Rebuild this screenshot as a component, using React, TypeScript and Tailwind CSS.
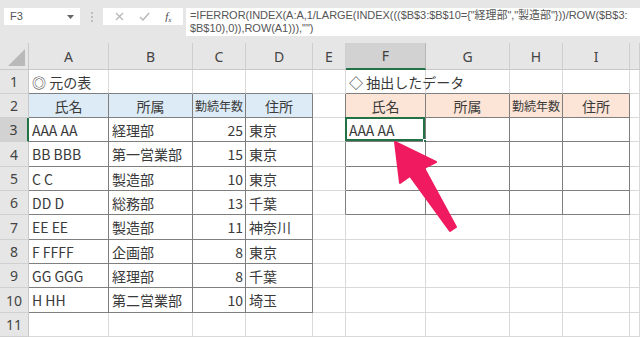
import React from "react";

const cols = ["A", "B", "C", "D", "E", "F", "G", "H", "I", ""];
const rowH = ["h-[24px]", "h-[24px]", "h-[24px]", "h-[25px]", "h-[24px]", "h-[24px]", "h-[25px]", "h-[24px]", "h-[24px]", "h-[25px]", "h-[24px]"];

const data = [
  ["AAA AA", "経理部", "25", "東京"],
  ["BB BBB", "第一営業部", "15", "東京"],
  ["C C", "製造部", "10", "東京"],
  ["DD D", "総務部", "13", "千葉"],
  ["EE EE", "製造部", "11", "神奈川"],
  ["F FFFF", "企画部", "8", "東京"],
  ["GG GGG", "経理部", "8", "千葉"],
  ["H HH", "第二営業部", "10", "埼玉"],
];

const formula1 = '=IFERROR(INDEX(A:A,1/LARGE(INDEX((($B$3:$B$10={"経理部","製造部"}))/ROW($B$3:';
const formula2 = '$B$10),0)),ROW(A1))),"")';

const inTable = (r: number, c: number) =>
  (r >= 2 && r <= 10 && c >= 1 && c <= 4) || (r >= 2 && r <= 6 && c >= 6 && c <= 9);

type Cell = { text?: string; kind?: "left" | "num" | "head" | "headSmall" | "title" };

function cellAt(r: number, c: number): Cell {
  if (r === 1 && c === 1) return { text: "◎ 元の表", kind: "title" };
  if (r === 1 && c === 6) return { text: "◇ 抽出したデータ", kind: "title" };
  if (r === 2) {
    const heads: Record<number, string> = { 1: "氏名", 2: "所属", 3: "勤続年数", 4: "住所", 6: "氏名", 7: "所属", 8: "勤続年数", 9: "住所" };
    if (heads[c]) return { text: heads[c], kind: c === 3 || c === 8 ? "headSmall" : "head" };
  }
  if (r >= 3 && r <= 10 && c >= 1 && c <= 4) {
    return { text: data[r - 3][c - 1], kind: c === 3 ? "num" : "left" };
  }
  if (r === 3 && c === 6) return { text: "AAA AA", kind: "left" };
  return {};
}

function GridCell({ r, c }: { r: number; c: number }) {
  const cell = cellAt(r, c);
  const right = inTable(r, c) || inTable(r, c + 1) ? "border-r-[#7f7f7f]" : "border-r-[#d9d9d9]";
  const bottom = inTable(r, c) || inTable(r + 1, c) ? "border-b-[#7f7f7f]" : "border-b-[#d9d9d9]";
  let bg = "bg-white";
  if (r === 2 && c >= 1 && c <= 4) bg = "bg-[#ddebf7]";
  if (r === 2 && c >= 6 && c <= 9) bg = "bg-[#fce4d6]";
  const align =
    cell.kind === "num"
      ? "justify-end pr-[2px]"
      : cell.kind === "head" || cell.kind === "headSmall"
        ? "justify-center"
        : "justify-start pl-[3px]";
  const size = cell.kind === "headSmall" ? "text-[12px]" : "text-[14px]";
  const selected = r === 3 && c === 6;
  return (
    <div className={`relative flex items-center border-r border-b ${right} ${bottom} ${bg} ${align} ${size} text-[#3a3a3a] ${cell.kind === "title" ? "overflow-visible z-10" : ""}`}>
      {cell.text && <span className="whitespace-nowrap leading-none">{cell.text}</span>}
      {selected && (
        <>
          <div className="absolute -left-[1px] -top-[1px] right-0 bottom-0 border-2 border-[#217346]" />
          <div className="absolute -right-[3px] -bottom-[3px] w-[5px] h-[5px] bg-[#217346] border border-white" />
        </>
      )}
    </div>
  );
}

export default function App() {
  return (
    <div className="relative w-[640px] h-[337px] overflow-hidden bg-white font-['Noto_Sans_CJK_JP',sans-serif]">
      <div className="h-[43px] bg-[#e6e6e6] flex items-start pt-[8px] font-['Noto_Sans','Noto_Sans_CJK_JP',sans-serif]">
        <div className="ml-[4px] w-[76px] h-[17px] bg-white flex items-center justify-between pl-[6px] pr-[6px] text-[11px] text-[#555]">
          <span className="font-['Liberation_Sans',sans-serif] text-[11px]">F3</span>
          <svg width="7" height="4" viewBox="0 0 7 4"><path d="M0 0h7L3.5 4z" fill="#666" /></svg>
        </div>
        <div className="w-[23px] h-[17px] flex flex-col items-center justify-center gap-[2px]">
          <span className="w-[2px] h-[2px] bg-[#bdbdbd]" />
          <span className="w-[2px] h-[2px] bg-[#bdbdbd]" />
          <span className="w-[2px] h-[2px] bg-[#bdbdbd]" />
        </div>
        <div className="w-[80px] h-[17px] bg-white flex items-center justify-around px-[4px] text-[#aaa]">
          <svg width="9" height="9" viewBox="0 0 9 9"><path d="M1 1l7 7M8 1L1 8" stroke="#b5b5b5" strokeWidth="1.2" /></svg>
          <svg width="11" height="9" viewBox="0 0 11 9"><path d="M1 5l3 3 6-7" stroke="#b5b5b5" strokeWidth="1.3" fill="none" /></svg>
          <span className="italic text-[11px] text-[#444] font-['Liberation_Serif',serif]">f<sub className="text-[7px]">x</sub></span>
        </div>
        <div className="ml-[3px] flex-1 h-[28px] bg-white pl-[4px] pt-[1px] text-[11px] leading-[13px] tracking-[-0.05px] text-[#555] font-['Liberation_Sans','Noto_Sans_CJK_JP',sans-serif] whitespace-nowrap">
          <div>{formula1}</div>
          <div>{formula2}</div>
        </div>
      </div>
      <div className="grid grid-cols-[29px_80px_84px_53px_67px_33px_80px_84px_53px_67px_1fr]">
        <div className="h-[27px] relative bg-[#e6e6e6] border-r border-b border-[#c8c8c8]">
          <svg className="absolute right-[3px] bottom-[3px]" width="17" height="17" viewBox="0 0 17 17"><path d="M17 0V17H0z" fill="#b9b9b9" /></svg>
        </div>
        {cols.map((l, i) => (
          <div
            key={i}
            className={`h-[27px] flex items-center justify-center text-[14px] border-r font-['Noto_Sans',sans-serif] ${i === 5 ? "bg-[#d2d2d2] border-b-2 border-b-[#217346] border-r-[#b5b5b5] text-[#3d3d3d]" : "bg-[#e6e6e6] border-b border-b-[#c8c8c8] border-r-[#cfcfcf] text-[#444]"}`}
          >
            {l}
          </div>
        ))}
        {rowH.map((h, ri) => {
          const r = ri + 1;
          return (
            <React.Fragment key={r}>
              <div
                className={`${h} flex items-center justify-center text-[14px] border-b border-b-[#d0d0d0] font-['Noto_Sans',sans-serif] ${r === 3 ? "bg-[#d2d2d2] border-r-2 border-r-[#217346] text-[#3d3d3d]" : "bg-[#e6e6e6] border-r border-r-[#c8c8c8] text-[#444]"}`}
              >
                {r}
              </div>
              {cols.map((_, ci) => (
                <GridCell key={ci} r={r} c={ci + 1} />
              ))}
            </React.Fragment>
          );
        })}
      </div>
      <svg className="absolute inset-0 pointer-events-none" width="640" height="337" viewBox="0 0 640 337">
        <path d="M395 142 L436 162 L424 168 L456 227 L450 231 L410 176 L400 183 Z" fill="#ef1a5f" strokeLinejoin="round" stroke="#ef1a5f" strokeWidth="2" />
      </svg>
    </div>
  );
}
